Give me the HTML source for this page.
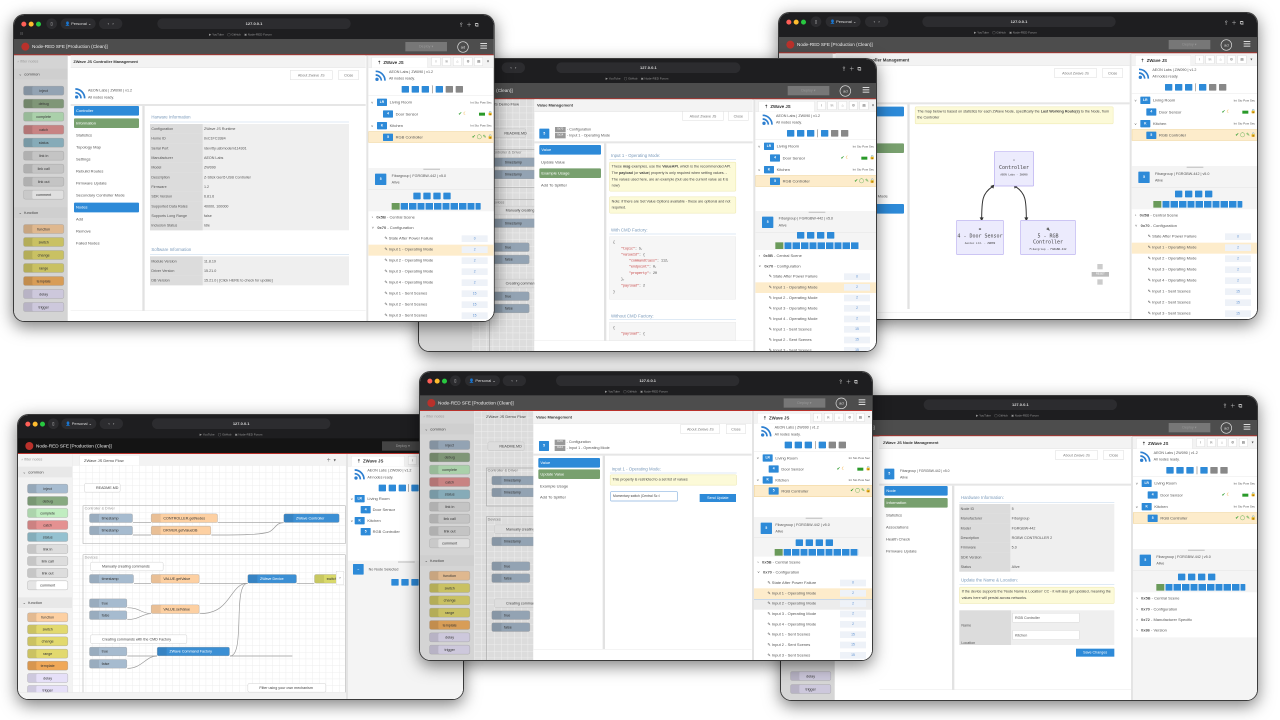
<!DOCTYPE html>
<html><head><meta charset="utf-8">
<style>
body{margin:0;width:1280px;height:720px;background:#fff;position:relative;overflow:hidden;font-family:"Liberation Sans",sans-serif}
.win{position:absolute;transform-origin:0 0;transform:scale(.33333);border-radius:34px;overflow:hidden;background:#fff;box-shadow:0 14px 50px rgba(0,0,0,.5);border:3px solid #3a3a3a;box-sizing:border-box}
.a{position:absolute}
.t{position:absolute;font-size:12px;color:#555;white-space:nowrap}
.s{font-size:11px}
.chr{left:0;top:0;right:0;height:72px;background:#1e1e20}
.dot{position:absolute;width:15px;height:15px;border-radius:50%;top:20px}
.pill{position:absolute;background:#2c2c2f;border-radius:16px;height:32px;top:10px;color:#ddd;font-size:12px;line-height:32px;text-align:center}
.bm{position:absolute;top:54px;font-size:9px;color:#999;white-space:nowrap}
.hdr{position:absolute;left:0;right:0;top:72px;height:46px;background:#141414;border-bottom:3px solid #b9312b}
.logo{position:absolute;left:22px;top:11px;width:24px;height:24px;border-radius:50%;background:#b9312b}
.htt{position:absolute;left:54px;top:14px;color:#eee;font-size:14px;white-space:nowrap}
.dep{position:absolute;top:9px;width:125px;height:28px;background:#555;color:#999;font-size:11px;line-height:28px;text-align:center}
.av{position:absolute;top:7px;width:30px;height:30px;border:2px solid #ddd;border-radius:50%;color:#ddd;font-size:12px;text-align:center;line-height:30px}
.hb{position:absolute;top:12px;width:20px;height:3px;background:#ddd;box-shadow:0 7px 0 #ddd,0 14px 0 #ddd}
.pal{position:absolute;left:0;top:121px;width:160px;bottom:0;background:#f3f3f3;border-right:1px solid #ddd}
.nd{position:absolute;left:28px;width:122px;height:28px;border-radius:6px;border:1px solid #999;font-size:11px;text-align:center;line-height:28px;color:#333;box-sizing:border-box;box-shadow:inset 26px 0 0 rgba(0,0,0,.1)}
.ph{position:absolute;left:0;right:0;height:32px;background:#e8e8e8;font-size:12px;color:#444;line-height:32px;padding-left:14px}
.shade{position:absolute;background:rgba(173,173,173,.37)}
.sb{position:absolute;background:#fff;border-left:6px solid #e4e4e4;overflow:hidden}
.tab{position:absolute;left:10px;top:6px;width:168px;height:31px;background:#fff;border:1px solid #ddd;border-bottom:none;font-weight:bold;font-size:13px;line-height:30px;padding-left:16px;box-sizing:border-box;color:#333}
.ib{position:absolute;top:6px;width:26px;height:26px;border:1px solid #ccc;background:#fff;font-size:10px;text-align:center;line-height:26px;color:#666;box-sizing:border-box}
.b{position:absolute;background:#2d8ad8;border-radius:2px}
.g{position:absolute;background:#888;border-radius:2px}
.bd{position:absolute;background:#2d8ad8;color:#fff;font-size:10px;text-align:center;border-radius:2px;font-weight:bold;height:22px;line-height:22px}
.ok{color:#2a9a2a;font-size:13px}
.vb{position:absolute;right:30px;width:78px;height:20px;background:#eef2f8;color:#5a8fd0;font-size:10px;text-align:center;line-height:20px}
.th{position:absolute;left:0;right:0;top:0;height:37px;background:#f3f3f3;border-bottom:1px solid #ddd}
.btn{position:absolute;height:28px;border:1px solid #ccc;background:#fff;font-size:11px;color:#777;text-align:center;line-height:28px;box-sizing:border-box}
.mi{position:absolute;height:29px;font-size:12px;color:#444;line-height:29px;padding-left:6px;border-radius:3px;box-sizing:border-box;white-space:nowrap}
.mb{background:#2d8ad8;color:#fff}
.mg{background:#78a06e;color:#fff}
.sh{position:absolute;font-size:13px;color:#7a9abb;white-space:nowrap}
.ul{position:absolute;height:2px;background:#cfe0f0}
.tr td{height:29px;font-size:11px;color:#555;padding:0 4px;white-space:nowrap}
table{border-collapse:collapse}
.note{position:absolute;background:#fcfad8;border:1px solid #e2db8c;border-radius:3px;font-size:11px;color:#444;line-height:19px;padding:4px 6px;box-sizing:border-box}
.cv{position:absolute;background-color:#fff;background-image:linear-gradient(#eee 1px,transparent 1px),linear-gradient(90deg,#eee 1px,transparent 1px);background-size:20px 20px}
.fn{position:absolute;height:27px;border-radius:5px;border:1px solid #999;font-size:11px;line-height:27px;color:#333;box-sizing:border-box;padding-left:36px;white-space:nowrap;box-shadow:inset 28px 0 0 rgba(0,0,0,.08)}
.cm{position:absolute;height:27px;border-radius:5px;border:1px solid #bbb;background:#fff;font-size:11px;line-height:27px;color:#444;box-sizing:border-box;padding-left:34px;white-space:nowrap}
.grp{position:absolute;border:2px solid #bbb;border-radius:2px}
.code{position:absolute;background:#f6f6f6;border:1px solid #e4e4e4;font-family:"Liberation Mono",monospace;font-size:10px;color:#444;line-height:18.5px;padding:8px 10px;box-sizing:border-box;white-space:pre}
.k{color:#c03030}
.gn{position:absolute;background:#ecebfd;border:2px solid #b9aef0;border-radius:3px;text-align:center;font-family:"DejaVu Sans Mono",monospace;color:#444;box-sizing:border-box}
</style></head><body>

<!-- ================= W3 top-right ================= -->
<div class="win" style="left:778px;top:12px;width:1440px;height:924px;z-index:1">
 <div class="a chr"></div>
 <div class="dot" style="left:22px;background:#ff5f57"></div><div class="dot" style="left:44px;background:#febc2e"></div><div class="dot" style="left:66px;background:#28c840"></div>
 <div class="pill" style="left:95px;width:32px">▯</div><div class="pill" style="left:140px;width:105px">👤 Personal ⌄</div><div class="pill" style="left:258px;width:70px">‹ &nbsp; ›</div>
 <div class="pill" style="left:430px;width:580px;font-weight:bold">127.0.0.1</div>
 <div class="t" style="left:1335px;top:16px;color:#ccc;font-size:16px">⇪ &nbsp;＋ &nbsp;⧉</div>
 <div class="bm" style="left:585px">▶ YouTube &nbsp;&nbsp; ◯ GitHub &nbsp;&nbsp; ▣ Node-RED Forum</div>
 <div class="hdr" style="background:#4d4d4d"><div class="logo"></div><div class="htt">Node-RED SFE [Production (Clean)]</div><div class="dep" style="right:140px;background:#777">Deploy ▾</div><div class="av" style="right:75px">ad</div><div class="hb" style="right:20px"></div></div>
 <div class="pal" style="background:#d6d6d6"></div>
 <div class="a" style="left:170px;top:121px;width:885px;bottom:0;background:#fff">
  <div class="th"></div><div class="t" style="left:11px;top:12px;font-weight:bold;color:#333;font-size:13px">ZWave JS Controller Management</div>
  <div class="btn" style="left:656px;top:45px;width:127px">About Zwave JS</div><div class="btn" style="left:800px;top:45px;width:62px">Close</div>
  <div class="a" style="left:0;right:0;top:147px;height:6px;background:#e6e6e6"></div>
  <div class="mi mb" style="left:10px;top:160px;width:195px"></div>
  <div class="mi mg" style="left:10px;top:270px;width:195px"></div>
  <div class="mi mb" style="left:10px;top:452px;width:195px"></div>
  <div class="t" style="left:10px;top:422px">Secondary Controller Mode</div>
  <div class="a" style="left:215px;top:153px;width:7px;bottom:30px;background:#e2e2e2"></div>
  <div class="note" style="left:238px;top:160px;width:595px;height:52px">The map below is based on statistics for each ZWave Node, specifically the <b>Last Working Route(s)</b> to the Node, from the Controller</div>
  <svg class="a" style="left:360px;top:390px" width="300" height="130"><path d="M110 10 C80 30,78 50,78 110" stroke="#333" stroke-width="3" fill="none"/><path d="M180 10 C210 30,212 50,212 110" stroke="#333" stroke-width="3" fill="none"/><path d="M104 8l12-4-3 12z" fill="#333"/><path d="M186 8l-12-4 3 12z" fill="#333"/><path d="M72 102l6 12 6-12z" fill="#333"/><path d="M206 102l6 12 6-12z" fill="#333"/></svg>
  <div class="gn" style="left:475px;top:294px;width:120px;height:105px"><div style="margin-top:18px;font-size:11px">⌔</div><div style="font-size:15px;margin-top:6px">Controller</div><div style="font-size:8px;margin-top:8px">AEON Labs - ZW090</div></div>
  <div class="gn" style="left:362px;top:500px;width:142px;height:105px"><div style="margin-top:18px;font-size:11px">▬</div><div style="font-size:15px;margin-top:6px">4 - Door Sensor</div><div style="font-size:8px;margin-top:8px">Aeotec Ltd. - ZW089</div></div>
  <div class="gn" style="left:554px;top:500px;width:166px;height:105px"><div style="margin-top:18px;font-size:11px">🔌</div><div style="font-size:15px;margin-top:6px">5 - RGB Controller</div><div style="font-size:8px;margin-top:8px">Fibargroup - FGRGBW-442</div></div>
  <div class="a" style="left:785px;top:632px;width:16px;height:16px;background:#ccc"></div><div class="a" style="left:768px;top:656px;width:52px;height:14px;background:#bbb;color:#fff;font-size:8px;text-align:center">RESET</div><div class="a" style="left:785px;top:678px;width:16px;height:16px;background:#ccc"></div>
  <div class="a" style="left:0;right:0;bottom:20px;height:1px;background:#ddd"></div>
 </div>
 <div class="sb" style="left:1052px;top:121px;width:388px;bottom:0">
  <div class="a" style="left:0;right:0;top:0;height:36px;background:#f3f3f3;border-bottom:1px solid #ddd"></div>
  <div class="tab">⇡&nbsp; ZWave JS</div>
  <div class="ib" style="left:190px">i</div><div class="ib" style="left:222px">⎘</div><div class="ib" style="left:254px">⌂</div><div class="ib" style="left:286px">⚙</div><div class="ib" style="left:318px">▤</div><div class="t" style="left:356px;top:10px">▾</div>
  <svg class="a" style="left:20px;top:44px" width="34" height="34"><circle cx="6" cy="28" r="5" fill="#2d7fd0"/><path d="M2 15a17 17 0 0 1 17 17" stroke="#2d7fd0" stroke-width="5" fill="none"/><path d="M2 4a28 28 0 0 1 28 28" stroke="#2d7fd0" stroke-width="5" fill="none"/></svg>
  <div class="t s" style="left:62px;top:44px">AEON Labs | ZW090 | v1.2</div><div class="t s" style="left:62px;top:64px">All nodes ready.</div>
  <div class="b" style="left:100px;top:92px;width:22px;height:20px"></div><div class="b" style="left:130px;top:92px;width:22px;height:20px"></div><div class="b" style="left:160px;top:92px;width:22px;height:20px"></div><div class="g" style="left:191px;top:90px;width:2px;height:24px"></div><div class="b" style="left:202px;top:92px;width:22px;height:20px"></div><div class="g" style="left:232px;top:92px;width:22px;height:20px"></div><div class="g" style="left:262px;top:92px;width:22px;height:20px"></div>
  <div class="a" style="left:0;right:0;top:120px;height:1px;background:#ddd"></div>
  <div class="t" style="left:8px;top:135px">˅</div><div class="bd" style="left:26px;top:130px;width:30px">LR</div><div class="t" style="left:64px;top:134px">Living Room</div><div class="t" style="right:18px;top:136px;font-size:9px">Int Sto Pow Sec</div>
  <div class="bd" style="left:44px;top:165px;width:30px">4</div><div class="t" style="left:82px;top:169px">Door Sensor</div><div class="t ok" style="right:92px;top:167px">✔ <span style="color:#f0a020">☾</span></div><div class="a" style="right:38px;top:172px;width:18px;height:9px;background:#2a9a2a"></div><div class="t ok" style="right:14px;top:166px">🔒</div>
  <div class="t" style="left:8px;top:205px">˅</div><div class="bd" style="left:26px;top:200px;width:30px">K</div><div class="t" style="left:64px;top:204px">Kitchen</div><div class="t" style="right:18px;top:206px;font-size:9px">Int Sto Pow Sec</div>
  <div class="a" style="left:0;right:0;top:228px;height:34px;background:#fdeccb;border:2px solid #f2d9a6;box-sizing:border-box"></div>
  <div class="bd" style="left:44px;top:235px;width:30px">5</div><div class="t" style="left:82px;top:239px">RGB Controller</div><div class="t ok" style="right:14px;top:236px">✔ ◯ ✎ 🔒</div>
  <div class="a" style="left:0;right:0;top:338px;bottom:0;background:#f4f4f4"></div><div class="a" style="left:165px;top:340px;width:50px;height:4px;background:#ccc"></div>
  <div class="bd" style="left:20px;top:355px;width:34px;height:34px;line-height:34px">5</div><div class="t s" style="left:70px;top:356px">Fibargroup | FGRGBW-442 | v5.0</div><div class="t s" style="left:70px;top:376px">Alive</div>
  <div class="a" style="left:0;right:0;top:402px;height:1px;background:#ddd"></div>
  <div class="b" style="left:130px;top:412px;width:22px;height:20px"></div><div class="b" style="left:160px;top:412px;width:22px;height:20px"></div><div class="b" style="left:190px;top:412px;width:22px;height:20px"></div><div class="b" style="left:220px;top:412px;width:22px;height:20px"></div>
  <div class="a" style="left:65px;top:443px;width:24px;height:20px;background:#6a9a5a"></div><div class="b" style="left:92px;top:443px;width:240px;height:20px;background:repeating-linear-gradient(90deg,#2d8ad8 0 22px,#fff 22px 25px)"></div>
  <div class="a" style="left:0;right:0;top:468px;bottom:0;background:#fff"></div>
  <div class="t" style="left:10px;top:478px">›&nbsp;&nbsp; <b>0x5B</b> - Central Scene</div>
  <div class="t" style="left:10px;top:510px">˅&nbsp;&nbsp; <b>0x70</b> - Configuration</div>
  <div class="t" style="left:48px;top:542px">✎ State After Power Failure</div><div class="vb" style="top:540px">0</div>
  <div class="a" style="left:0;right:0;top:568px;height:33px;background:#fdeccb"></div><div class="t" style="left:48px;top:575px">✎ Input 1 - Operating Mode</div><div class="vb" style="top:573px">2</div>
  <div class="t" style="left:48px;top:608px">✎ Input 2 - Operating Mode</div><div class="vb" style="top:606px">2</div>
  <div class="t" style="left:48px;top:641px">✎ Input 3 - Operating Mode</div><div class="vb" style="top:639px">2</div>
  <div class="t" style="left:48px;top:674px">✎ Input 4 - Operating Mode</div><div class="vb" style="top:672px">2</div>
  <div class="t" style="left:48px;top:707px">✎ Input 1 - Sent Scenes</div><div class="vb" style="top:705px">15</div>
  <div class="t" style="left:48px;top:740px">✎ Input 2 - Sent Scenes</div><div class="vb" style="top:738px">15</div>
  <div class="t" style="left:48px;top:773px">✎ Input 3 - Sent Scenes</div><div class="vb" style="top:771px">15</div>
 </div>
</div>

<!-- ================= W2 top-middle ================= -->
<div class="win" style="left:418px;top:58px;width:1377px;height:882px;z-index:2">
 <div class="a chr"></div>
 <div class="dot" style="left:22px;background:#ff5f57"></div><div class="dot" style="left:44px;background:#febc2e"></div><div class="dot" style="left:66px;background:#28c840"></div>
 <div class="pill" style="left:248px;width:70px">‹ &nbsp; ›</div>
 <div class="pill" style="left:412px;width:552px;font-weight:bold">127.0.0.1</div>
 <div class="t" style="left:1268px;top:16px;color:#ccc;font-size:16px">⇪ &nbsp;＋ &nbsp;⧉</div>
 <div class="bm" style="left:560px">▶ YouTube &nbsp;&nbsp; ◯ GitHub &nbsp;&nbsp; ▣ Node-RED Forum</div>
 <div class="hdr" style="background:#4d4d4d"><div class="logo"></div><div class="htt">Node-RED SFE [Production (Clean)]</div><div class="dep" style="right:140px;background:#777">Deploy ▾</div><div class="av" style="right:75px">ad</div><div class="hb" style="right:20px"></div></div>
 <div class="pal" style="background:#d6d6d6"></div>
 <div class="cv" style="left:161px;top:121px;width:200px;bottom:0;background-color:#ddd">
  <div class="t" style="left:20px;top:8px;color:#444">ZWave JS Demo Flow</div>
  <div class="cm" style="left:60px;top:88px;width:100px;background:#ddd">README.MD</div>
  <div class="grp" style="left:50px;top:150px;width:300px;height:112px;border-color:#aaa"></div><div class="t s" style="left:56px;top:154px;color:#777">Controller &amp; Driver</div>
  <div class="fn" style="left:60px;top:175px;width:130px;background:#93a3b3">timestamp</div><div class="fn" style="left:60px;top:212px;width:130px;background:#93a3b3">timestamp</div>
  <div class="grp" style="left:50px;top:300px;width:300px;height:500px;border-color:#aaa"></div><div class="t s" style="left:56px;top:304px;color:#777">Devices</div>
  <div class="cm" style="left:64px;top:320px;width:220px;background:#ddd">Manually creating commands</div>
  <div class="fn" style="left:60px;top:358px;width:130px;background:#93a3b3">timestamp</div>
  <div class="fn" style="left:60px;top:430px;width:110px;background:#93a3b3">true</div><div class="fn" style="left:60px;top:467px;width:110px;background:#93a3b3">false</div>
  <div class="cm" style="left:64px;top:539px;width:260px;background:#ddd">Creating commands</div>
  <div class="fn" style="left:60px;top:577px;width:110px;background:#93a3b3">true</div><div class="fn" style="left:60px;top:614px;width:110px;background:#93a3b3">false</div>
 </div>
 <div class="a" style="left:346px;top:121px;width:655px;bottom:0;background:#fff">
  <div class="th"></div><div class="t" style="left:8px;top:11px;font-weight:bold;color:#333;font-size:12px">Value Management</div>
  <div class="btn" style="left:445px;top:36px;width:122px">About Zwave JS</div><div class="btn" style="left:582px;top:36px;width:60px">Close</div>
  <div class="bd" style="left:15px;top:88px;width:30px;height:30px;line-height:30px">5</div>
  <div class="a" style="left:62px;top:83px;width:32px;height:16px;background:#999;color:#fff;font-size:8px;text-align:center">0x70</div><div class="a" style="left:62px;top:101px;width:32px;height:16px;background:#999;color:#fff;font-size:8px;text-align:center">0x14</div>
  <div class="t s" style="left:98px;top:84px">- Configuration</div><div class="t s" style="left:98px;top:102px">- Input 1 - Operating Mode</div>
  <div class="a" style="left:0;right:0;top:126px;height:6px;background:#e6e6e6"></div>
  <div class="mi mb" style="left:15px;top:137px;width:185px">Value</div>
  <div class="t" style="left:20px;top:182px">Update Value</div>
  <div class="mi mg" style="left:15px;top:207px;width:185px">Example Usage</div>
  <div class="t" style="left:20px;top:250px">Add To Splitter</div>
  <div class="a" style="left:209px;top:132px;width:7px;bottom:30px;background:#e2e2e2"></div>
  <div class="sh" style="left:230px;top:161px">Input 1 - Operating Mode:</div><div class="ul" style="left:225px;top:179px;width:380px"></div>
  <div class="note" style="left:225px;top:188px;width:380px;height:88px">These <b>msg</b> examples, use the <b>ValueAPI</b>, which is the recommended API. The <b>payload</b> (or <b>value</b>) property is only required when setting values. - The values used here, are an example (but use the current value as it is now)</div>
  <div class="note" style="left:225px;top:292px;width:380px;height:50px">Note: if there are Set Value Options available - these are optional and not required.</div>
  <div class="sh" style="left:230px;top:385px">With CMD Factory:</div><div class="ul" style="left:225px;top:403px;width:380px"></div>
  <div class="code" style="left:225px;top:412px;width:380px;height:188px">{
    <span class="k">"topic"</span>: 5,
    <span class="k">"valueId"</span>: {
        <span class="k">"commandClass"</span>: 112,
        <span class="k">"endpoint"</span>: 0,
        <span class="k">"property"</span>: 20
    },
    <span class="k">"payload"</span>: 2
}</div>
  <div class="sh" style="left:230px;top:642px">Without CMD Factory:</div><div class="ul" style="left:225px;top:660px;width:380px"></div>
  <div class="code" style="left:225px;top:668px;width:380px;height:100px">{
    <span class="k">"payload"</span>: {</div>
  <div class="a" style="left:0;right:0;bottom:0;height:30px;background:#fff;border-top:1px solid #ddd"></div>
 </div>
 <div class="sb" style="left:1003px;top:121px;width:374px;bottom:0">
  <div class="a" style="left:0;right:0;top:0;height:36px;background:#f3f3f3;border-bottom:1px solid #ddd"></div>
  <div class="tab">⇡&nbsp; ZWave JS</div>
  <div class="ib" style="left:185px">i</div><div class="ib" style="left:217px">⎘</div><div class="ib" style="left:249px">⌂</div><div class="ib" style="left:281px">⚙</div><div class="ib" style="left:313px">▤</div><div class="t" style="left:350px;top:10px">▾</div>
  <svg class="a" style="left:20px;top:44px" width="34" height="34"><circle cx="6" cy="28" r="5" fill="#2d7fd0"/><path d="M2 15a17 17 0 0 1 17 17" stroke="#2d7fd0" stroke-width="5" fill="none"/><path d="M2 4a28 28 0 0 1 28 28" stroke="#2d7fd0" stroke-width="5" fill="none"/></svg>
  <div class="t s" style="left:62px;top:44px">AEON Labs | ZW090 | v1.2</div><div class="t s" style="left:62px;top:64px">All nodes ready.</div>
  <div class="b" style="left:95px;top:92px;width:22px;height:20px"></div><div class="b" style="left:125px;top:92px;width:22px;height:20px"></div><div class="b" style="left:155px;top:92px;width:22px;height:20px"></div><div class="g" style="left:186px;top:90px;width:2px;height:24px"></div><div class="b" style="left:197px;top:92px;width:22px;height:20px"></div><div class="g" style="left:227px;top:92px;width:22px;height:20px"></div><div class="g" style="left:257px;top:92px;width:22px;height:20px"></div>
  <div class="a" style="left:0;right:0;top:120px;height:1px;background:#ddd"></div>
  <div class="t" style="left:8px;top:135px">˅</div><div class="bd" style="left:26px;top:130px;width:30px">LR</div><div class="t" style="left:64px;top:134px">Living Room</div><div class="t" style="right:18px;top:136px;font-size:9px">Int Sto Pow Sec</div>
  <div class="bd" style="left:44px;top:165px;width:30px">4</div><div class="t" style="left:82px;top:169px">Door Sensor</div><div class="t ok" style="right:92px;top:167px">✔ <span style="color:#f0a020">☾</span></div><div class="a" style="right:38px;top:172px;width:18px;height:9px;background:#2a9a2a"></div><div class="t ok" style="right:14px;top:166px">🔒</div>
  <div class="t" style="left:8px;top:205px">˅</div><div class="bd" style="left:26px;top:200px;width:30px">K</div><div class="t" style="left:64px;top:204px">Kitchen</div><div class="t" style="right:18px;top:206px;font-size:9px">Int Sto Pow Sec</div>
  <div class="a" style="left:0;right:0;top:228px;height:34px;background:#fdeccb;border:2px solid #f2d9a6;box-sizing:border-box"></div>
  <div class="bd" style="left:44px;top:235px;width:30px">5</div><div class="t" style="left:82px;top:239px">RGB Controller</div><div class="t ok" style="right:14px;top:236px">✔ ◯ ✎ 🔒</div>
  <div class="a" style="left:0;right:0;top:335px;bottom:0;background:#f4f4f4"></div><div class="a" style="left:160px;top:337px;width:50px;height:4px;background:#ccc"></div>
  <div class="bd" style="left:20px;top:352px;width:34px;height:34px;line-height:34px">5</div><div class="t s" style="left:70px;top:352px">Fibargroup | FGRGBW-442 | v5.0</div><div class="t s" style="left:70px;top:372px">Alive</div>
  <div class="a" style="left:0;right:0;top:398px;height:1px;background:#ddd"></div>
  <div class="b" style="left:125px;top:398px;width:22px;height:20px"></div><div class="b" style="left:155px;top:398px;width:22px;height:20px"></div><div class="b" style="left:185px;top:398px;width:22px;height:20px"></div><div class="b" style="left:215px;top:398px;width:22px;height:20px"></div>
  <div class="a" style="left:60px;top:429px;width:24px;height:20px;background:#6a9a5a"></div><div class="b" style="left:87px;top:429px;width:225px;height:20px;background:repeating-linear-gradient(90deg,#2d8ad8 0 22px,#fff 22px 25px)"></div>
  <div class="a" style="left:0;right:0;top:452px;bottom:0;background:#fff"></div>
  <div class="t" style="left:10px;top:462px">›&nbsp;&nbsp; <b>0x5B</b> - Central Scene</div>
  <div class="t" style="left:10px;top:493px">˅&nbsp;&nbsp; <b>0x70</b> - Configuration</div>
  <div class="t" style="left:40px;top:524px">✎ State After Power Failure</div><div class="vb" style="top:522px">0</div>
  <div class="a" style="left:0;right:0;top:549px;height:32px;background:#fdeccb"></div><div class="t" style="left:40px;top:556px">✎ Input 1 - Operating Mode</div><div class="vb" style="top:554px">2</div>
  <div class="t" style="left:40px;top:588px">✎ Input 2 - Operating Mode</div><div class="vb" style="top:586px">2</div>
  <div class="t" style="left:40px;top:619px">✎ Input 3 - Operating Mode</div><div class="vb" style="top:617px">2</div>
  <div class="t" style="left:40px;top:651px">✎ Input 4 - Operating Mode</div><div class="vb" style="top:649px">2</div>
  <div class="t" style="left:40px;top:682px">✎ Input 1 - Sent Scenes</div><div class="vb" style="top:680px">15</div>
  <div class="t" style="left:40px;top:714px">✎ Input 2 - Sent Scenes</div><div class="vb" style="top:712px">15</div>
  <div class="t" style="left:40px;top:745px">✎ Input 3 - Sent Scenes</div><div class="vb" style="top:743px">15</div>
 </div>
</div>

<!-- ================= W1 top-left ================= -->
<div class="win" style="left:13px;top:14px;width:1445px;height:924px;z-index:3">
 <div class="a chr"></div>
 <div class="dot" style="left:22px;background:#ff5f57"></div><div class="dot" style="left:44px;background:#febc2e"></div><div class="dot" style="left:66px;background:#28c840"></div>
 <div class="pill" style="left:97px;width:32px">▯</div><div class="pill" style="left:140px;width:105px">👤 Personal ⌄</div><div class="pill" style="left:255px;width:70px">‹ &nbsp; ›</div>
 <div class="pill" style="left:430px;width:580px;font-weight:bold">127.0.0.1</div>
 <div class="t" style="left:1335px;top:16px;color:#ccc;font-size:16px">⇪ &nbsp;＋ &nbsp;⧉</div>
 <div class="t" style="left:18px;top:52px;color:#888;font-size:10px">☷</div>
 <div class="bm" style="left:585px">▶ YouTube &nbsp;&nbsp; ◯ GitHub &nbsp;&nbsp; ▣ Node-RED Forum</div>
 <div class="hdr" style="background:#4d4d4d"><div class="logo"></div><div class="htt">Node-RED SFE [Production (Clean)]</div><div class="dep" style="right:140px;background:#777">Deploy ▾</div><div class="av" style="right:75px">ad</div><div class="hb" style="right:20px"></div></div>
 <div class="pal" style="background:#d4d4d4">
  <div class="t s" style="left:10px;top:12px;color:#999">⌕ filter nodes</div>
  <div class="ph" style="top:40px;background:#cfcfcf">⌄ &nbsp;common</div>
  <div class="nd" style="top:92px;background:#93a3b3">inject</div><div class="nd" style="top:131px;background:#7f9677">debug</div><div class="nd" style="top:170px;background:#aad0aa">complete</div><div class="nd" style="top:209px;background:#c88383">catch</div><div class="nd" style="top:248px;background:#86abb8">status</div><div class="nd" style="top:287px;background:#c4c4c4">link in</div><div class="nd" style="top:326px;background:#c4c4c4">link call</div><div class="nd" style="top:365px;background:#c4c4c4">link out</div><div class="nd" style="top:404px;background:#e0e0e0">comment</div>
  <div class="ph" style="top:456px;background:#cfcfcf">⌄ &nbsp;function</div>
  <div class="nd" style="top:507px;background:#dfb88f">function</div><div class="nd" style="top:546px;background:#c9c163">switch</div><div class="nd" style="top:585px;background:#c9c163">change</div><div class="nd" style="top:624px;background:#c9c163">range</div><div class="nd" style="top:663px;background:#d89d57">template</div><div class="nd" style="top:702px;background:#cdc8dc">delay</div><div class="nd" style="top:741px;background:#cdc8dc">trigger</div>
 </div>
 <div class="a" style="left:170px;top:121px;width:885px;bottom:0;background:#fff">
  <div class="th"></div><div class="t" style="left:8px;top:12px;font-weight:bold;color:#333;font-size:12px">ZWave JS Controller Management</div>
  <div class="btn" style="left:658px;top:45px;width:127px">About Zwave JS</div><div class="btn" style="left:803px;top:45px;width:62px">Close</div>
  <svg class="a" style="left:12px;top:97px" width="34" height="34"><circle cx="6" cy="28" r="5" fill="#2d7fd0"/><path d="M2 15a17 17 0 0 1 17 17" stroke="#2d7fd0" stroke-width="5" fill="none"/><path d="M2 4a28 28 0 0 1 28 28" stroke="#2d7fd0" stroke-width="5" fill="none"/></svg>
  <div class="t s" style="left:52px;top:100px">AEON Labs | ZW090 | v1.2</div><div class="t s" style="left:52px;top:120px">All nodes ready.</div>
  <div class="a" style="left:0;right:0;top:146px;height:6px;background:#e6e6e6"></div>
  <div class="mi mb" style="left:10px;top:152px;width:195px">Controller</div>
  <div class="mi mg" style="left:10px;top:189px;width:195px">Information</div>
  <div class="t" style="left:16px;top:232px">Statistics</div><div class="t" style="left:16px;top:268px">Topology Map</div><div class="t" style="left:16px;top:304px">Settings</div><div class="t" style="left:16px;top:340px">Rebuild Routes</div><div class="t" style="left:16px;top:377px">Firmware Update</div><div class="t" style="left:16px;top:413px">Secondary Controller Mode</div>
  <div class="mi mb" style="left:10px;top:442px;width:195px">Nodes</div>
  <div class="t" style="left:16px;top:485px">Add</div><div class="t" style="left:16px;top:521px">Remove</div><div class="t" style="left:16px;top:557px">Failed Nodes</div>
  <div class="a" style="left:215px;top:152px;width:7px;bottom:30px;background:#e2e2e2"></div>
  <div class="sh" style="left:242px;top:178px">Harware Information</div><div class="ul" style="left:238px;top:199px;width:597px"></div>
  <table class="a" style="left:238px;top:206px;width:597px;background:#efefef">
   <tr class="tr"><td style="width:150px;background:#dcdcdc">Configuration</td><td>ZWave JS Runtime</td></tr>
   <tr class="tr"><td style="background:#dcdcdc">Home ID</td><td>0xC1FC3384</td></tr>
   <tr class="tr"><td style="background:#dcdcdc">Serial Port</td><td>/dev/tty.usbmodem114301</td></tr>
   <tr class="tr"><td style="background:#dcdcdc">Manufacturer</td><td>AEON Labs</td></tr>
   <tr class="tr"><td style="background:#dcdcdc">Model</td><td>ZW090</td></tr>
   <tr class="tr"><td style="background:#dcdcdc">Description</td><td>Z-Stick Gen5 USB Controller</td></tr>
   <tr class="tr"><td style="background:#dcdcdc">Firmware</td><td>1.2</td></tr>
   <tr class="tr"><td style="background:#dcdcdc">SDK Version</td><td>6.81.6</td></tr>
   <tr class="tr"><td style="background:#dcdcdc">Supported Data Rates</td><td>40000, 100000</td></tr>
   <tr class="tr"><td style="background:#dcdcdc">Supports Long Range</td><td>false</td></tr>
   <tr class="tr"><td style="background:#dcdcdc">Inclusion Status</td><td>Idle</td></tr>
  </table>
  <div class="sh" style="left:242px;top:575px">Software Information</div><div class="ul" style="left:238px;top:596px;width:597px"></div>
  <table class="a" style="left:238px;top:603px;width:597px;background:#efefef">
   <tr class="tr"><td style="width:150px;background:#dcdcdc">Module Version</td><td>11.8.19</td></tr>
   <tr class="tr"><td style="background:#dcdcdc">Driver Version</td><td>15.21.0</td></tr>
   <tr class="tr"><td style="background:#dcdcdc">DB Version</td><td>15.21.0 | [Click HERE to check for update]</td></tr>
  </table>
  <div class="a" style="left:0;right:0;bottom:0;height:30px;background:#fff;border-top:1px solid #ddd"></div>
 </div>
 <div class="sb" style="left:1057px;top:121px;width:388px;bottom:0">
  <div class="a" style="left:0;right:0;top:0;height:36px;background:#f3f3f3;border-bottom:1px solid #ddd"></div>
  <div class="tab">⇡&nbsp; ZWave JS</div>
  <div class="ib" style="left:190px">i</div><div class="ib" style="left:222px">⎘</div><div class="ib" style="left:254px">⌂</div><div class="ib" style="left:286px">⚙</div><div class="ib" style="left:318px">▤</div><div class="t" style="left:356px;top:10px">▾</div>
  <svg class="a" style="left:20px;top:44px" width="34" height="34"><circle cx="6" cy="28" r="5" fill="#2d7fd0"/><path d="M2 15a17 17 0 0 1 17 17" stroke="#2d7fd0" stroke-width="5" fill="none"/><path d="M2 4a28 28 0 0 1 28 28" stroke="#2d7fd0" stroke-width="5" fill="none"/></svg>
  <div class="t s" style="left:62px;top:44px">AEON Labs | ZW090 | v1.2</div><div class="t s" style="left:62px;top:64px">All nodes ready.</div>
  <div class="b" style="left:100px;top:92px;width:22px;height:20px"></div><div class="b" style="left:130px;top:92px;width:22px;height:20px"></div><div class="b" style="left:160px;top:92px;width:22px;height:20px"></div><div class="g" style="left:191px;top:90px;width:2px;height:24px"></div><div class="b" style="left:202px;top:92px;width:22px;height:20px"></div><div class="g" style="left:232px;top:92px;width:22px;height:20px"></div><div class="g" style="left:262px;top:92px;width:22px;height:20px"></div>
  <div class="a" style="left:0;right:0;top:120px;height:1px;background:#ddd"></div>
  <div class="t" style="left:8px;top:135px">˅</div><div class="bd" style="left:26px;top:130px;width:30px">LR</div><div class="t" style="left:64px;top:134px">Living Room</div><div class="t" style="right:18px;top:136px;font-size:9px">Int Sto Pow Sec</div>
  <div class="bd" style="left:44px;top:165px;width:30px">4</div><div class="t" style="left:82px;top:169px">Door Sensor</div><div class="t ok" style="right:92px;top:167px">✔ <span style="color:#f0a020">☾</span></div><div class="a" style="right:38px;top:172px;width:18px;height:9px;background:#2a9a2a"></div><div class="t ok" style="right:14px;top:166px">🔒</div>
  <div class="t" style="left:8px;top:205px">˅</div><div class="bd" style="left:26px;top:200px;width:30px">K</div><div class="t" style="left:64px;top:204px">Kitchen</div><div class="t" style="right:18px;top:206px;font-size:9px">Int Sto Pow Sec</div>
  <div class="a" style="left:0;right:0;top:228px;height:34px;background:#fdeccb;border:2px solid #f2d9a6;box-sizing:border-box"></div>
  <div class="bd" style="left:44px;top:235px;width:30px">5</div><div class="t" style="left:82px;top:239px">RGB Controller</div><div class="t ok" style="right:14px;top:236px">✔ ◯ ✎ 🔒</div>
  <div class="a" style="left:0;right:0;top:338px;bottom:0;background:#f4f4f4"></div><div class="a" style="left:165px;top:340px;width:50px;height:4px;background:#ccc"></div>
  <div class="bd" style="left:20px;top:355px;width:34px;height:34px;line-height:34px">5</div><div class="t s" style="left:70px;top:356px">Fibargroup | FGRGBW-442 | v5.0</div><div class="t s" style="left:70px;top:376px">Alive</div>
  <div class="a" style="left:0;right:0;top:402px;height:1px;background:#ddd"></div>
  <div class="b" style="left:135px;top:412px;width:22px;height:20px"></div><div class="b" style="left:165px;top:412px;width:22px;height:20px"></div><div class="b" style="left:195px;top:412px;width:22px;height:20px"></div><div class="b" style="left:225px;top:412px;width:22px;height:20px"></div>
  <div class="a" style="left:70px;top:443px;width:24px;height:20px;background:#6a9a5a"></div><div class="b" style="left:97px;top:443px;width:240px;height:20px;background:repeating-linear-gradient(90deg,#2d8ad8 0 22px,#fff 22px 25px)"></div>
  <div class="a" style="left:0;right:0;top:468px;bottom:0;background:#fff"></div>
  <div class="t" style="left:10px;top:478px">›&nbsp;&nbsp; <b>0x5B</b> - Central Scene</div>
  <div class="t" style="left:10px;top:510px">˅&nbsp;&nbsp; <b>0x70</b> - Configuration</div>
  <div class="t" style="left:48px;top:542px">✎ State After Power Failure</div><div class="vb" style="top:540px">0</div>
  <div class="a" style="left:0;right:0;top:568px;height:33px;background:#fdeccb"></div><div class="t" style="left:48px;top:575px">✎ Input 1 - Operating Mode</div><div class="vb" style="top:573px">2</div>
  <div class="t" style="left:48px;top:608px">✎ Input 2 - Operating Mode</div><div class="vb" style="top:606px">2</div>
  <div class="t" style="left:48px;top:641px">✎ Input 3 - Operating Mode</div><div class="vb" style="top:639px">2</div>
  <div class="t" style="left:48px;top:674px">✎ Input 4 - Operating Mode</div><div class="vb" style="top:672px">2</div>
  <div class="t" style="left:48px;top:707px">✎ Input 1 - Sent Scenes</div><div class="vb" style="top:705px">15</div>
  <div class="t" style="left:48px;top:740px">✎ Input 2 - Sent Scenes</div><div class="vb" style="top:738px">15</div>
  <div class="t" style="left:48px;top:773px">✎ Input 3 - Sent Scenes</div><div class="vb" style="top:771px">15</div>
 </div>
</div>

<!-- ================= W4 bottom-left ================= -->
<div class="win" style="left:17px;top:414px;width:1341px;height:858px;z-index:1">
 <div class="a chr"></div>
 <div class="dot" style="left:22px;background:#ff5f57"></div><div class="dot" style="left:44px;background:#febc2e"></div><div class="dot" style="left:66px;background:#28c840"></div>
 <div class="pill" style="left:90px;width:32px">▯</div><div class="pill" style="left:130px;width:105px">👤 Personal ⌄</div><div class="pill" style="left:245px;width:70px">‹ &nbsp; ›</div>
 <div class="pill" style="left:402px;width:535px;font-weight:bold">127.0.0.1</div>
 <div class="bm" style="left:545px">▶ YouTube &nbsp;&nbsp; ◯ GitHub &nbsp;&nbsp; ▣ Node-RED Forum</div>
 <div class="hdr" style="top:70px;height:44px"><div class="logo"></div><div class="htt">Node-RED SFE [Production (Clean)]</div><div class="dep" style="left:1092px;background:#444">Deploy ▾</div></div>
 <div class="pal" style="top:117px;width:162px">
  <div class="t s" style="left:10px;top:10px;color:#999">⌕ filter nodes</div>
  <div class="ph" style="top:38px">⌄ &nbsp;common</div>
  <div class="nd" style="top:90px;background:#a6bbcf">inject</div><div class="nd" style="top:127px;background:#87a980">debug</div><div class="nd" style="top:163px;background:#c0edc0">complete</div><div class="nd" style="top:199px;background:#e49191">catch</div><div class="nd" style="top:235px;background:#94c1d0">status</div><div class="nd" style="top:271px;background:#ddd">link in</div><div class="nd" style="top:307px;background:#ddd">link call</div><div class="nd" style="top:343px;background:#ddd">link out</div><div class="nd" style="top:380px;background:#fff">comment</div>
  <div class="ph" style="top:430px">⌄ &nbsp;function</div>
  <div class="nd" style="top:476px;background:#fdd0a2">function</div><div class="nd" style="top:512px;background:#e2d96e">switch</div><div class="nd" style="top:548px;background:#e2d96e">change</div><div class="nd" style="top:585px;background:#e2d96e">range</div><div class="nd" style="top:621px;background:#f0a858">template</div><div class="nd" style="top:658px;background:#e6e0f8">delay</div><div class="nd" style="top:694px;background:#e6e0f8">trigger</div>
 </div>
 <div class="a" style="left:163px;top:117px;width:822px;height:34px;background:#f3f3f3;border-bottom:1px solid #ddd"></div>
 <div class="a" style="left:185px;top:121px;width:180px;height:30px;background:#fff;border:1px solid #ddd;border-bottom:none;font-size:12px;color:#444;line-height:30px;padding-left:12px;box-sizing:border-box">ZWave JS Demo Flow</div>
 <div class="t" style="left:925px;top:124px;font-size:14px">＋ &nbsp;▾</div>
 <div class="cv" style="left:163px;top:151px;width:820px;height:680px"></div>
 <svg class="a" style="left:163px;top:151px" width="820" height="680"><g stroke="#999" stroke-width="2" fill="none">
  <path d="M182 172 H236"/><path d="M182 209 H236"/><path d="M436 172 H634"/><path d="M417 209 C500 209,560 209,590 200 C610 190,610 172,634 172"/>
  <path d="M185 354 H236"/><path d="M382 354 H526"/><path d="M673 354 H726"/><path d="M165 427 C200 427,210 445,236 445"/><path d="M165 463 C200 463,210 445,236 445"/><path d="M382 445 C480 445,470 354,526 354"/><path d="M165 572 C200 572,210 572,254 572"/><path d="M165 609 C210 609,220 572,254 572"/><path d="M473 572 C520 572,480 354,526 354"/><path d="M473 572 H660"/>
 </g></svg>
 <div class="cm" style="left:199px;top:205px;width:108px">README.MD</div>
 <div class="grp" style="left:194px;top:271px;width:785px;height:112px"></div><div class="t s" style="left:200px;top:274px;color:#999">Controller &amp; Driver</div>
 <div class="fn" style="left:214px;top:296px;width:130px;background:#a6bbcf">timestamp</div><div class="fn" style="left:214px;top:333px;width:130px;background:#a6bbcf">timestamp</div>
 <div class="fn" style="left:399px;top:296px;width:200px;background:#fdd0a2">CONTROLLER.getNodes</div><div class="fn" style="left:399px;top:333px;width:180px;background:#fdd0a2">DRIVER.getValueDB</div>
 <div class="fn" style="left:797px;top:296px;width:167px;background:#3b8fd4;color:#fff">ZWave Controller</div>
 <div class="grp" style="left:194px;top:418px;width:785px;height:440px"></div><div class="t s" style="left:200px;top:421px;color:#999">Devices</div>
 <div class="cm" style="left:217px;top:441px;width:219px">Manually creating commands</div>
 <div class="fn" style="left:214px;top:478px;width:133px;background:#a6bbcf">timestamp</div><div class="fn" style="left:399px;top:478px;width:145px;background:#fdd0a2">VALUE.getValue</div>
 <div class="fn" style="left:689px;top:478px;width:147px;background:#3b8fd4;color:#fff">ZWave Device</div><div class="fn" style="left:889px;top:478px;width:75px;background:#d9d96a">switch</div>
 <div class="fn" style="left:214px;top:551px;width:113px;background:#a6bbcf">true</div><div class="fn" style="left:214px;top:587px;width:113px;background:#a6bbcf">false</div><div class="fn" style="left:399px;top:569px;width:145px;background:#fdd0a2">VALUE.setValue</div>
 <div class="cm" style="left:217px;top:659px;width:290px">Creating commands with the CMD Factory</div>
 <div class="fn" style="left:214px;top:696px;width:113px;background:#a6bbcf">true</div><div class="fn" style="left:214px;top:733px;width:113px;background:#a6bbcf">false</div>
 <div class="fn" style="left:417px;top:696px;width:218px;background:#3b8fd4;color:#fff">ZWave Command Factory</div>
 <div class="cm" style="left:689px;top:805px;width:235px">Filter using your own mechanism</div>
 <div class="a" style="left:954px;top:468px;width:22px;height:40px;background:#fff;border:1px solid #ccc;font-size:11px;text-align:center;line-height:40px">›</div>
 <div class="a" style="left:0;right:0;top:832px;bottom:0;background:#f3f3f3;border-top:1px solid #ddd"></div>
 <div class="sb" style="left:984px;top:117px;width:357px;bottom:0">
  <div class="a" style="left:0;right:0;top:0;height:36px;background:#f3f3f3;border-bottom:1px solid #ddd"></div>
  <div class="tab" style="width:160px">⇡&nbsp; ZWave JS</div>
  <div class="ib" style="left:180px">i</div><div class="ib" style="left:212px">⎘</div>
  <svg class="a" style="left:18px;top:44px" width="34" height="34"><circle cx="6" cy="28" r="5" fill="#2d7fd0"/><path d="M2 15a17 17 0 0 1 17 17" stroke="#2d7fd0" stroke-width="5" fill="none"/><path d="M2 4a28 28 0 0 1 28 28" stroke="#2d7fd0" stroke-width="5" fill="none"/></svg>
  <div class="t s" style="left:58px;top:44px">AEON Labs | ZW090 | v1.2</div><div class="t s" style="left:58px;top:64px">All nodes ready.</div>
  <div class="b" style="left:92px;top:92px;width:22px;height:20px"></div><div class="b" style="left:122px;top:92px;width:22px;height:20px"></div><div class="b" style="left:152px;top:92px;width:22px;height:20px"></div><div class="g" style="left:180px;top:90px;width:2px;height:24px"></div><div class="b" style="left:190px;top:92px;width:22px;height:20px"></div>
  <div class="t" style="left:8px;top:128px">˅</div><div class="bd" style="left:20px;top:123px;width:30px">LR</div><div class="t" style="left:58px;top:127px">Living Room</div>
  <div class="bd" style="left:38px;top:156px;width:30px">4</div><div class="t" style="left:74px;top:160px">Door Sensor</div>
  <div class="t" style="left:8px;top:194px">˅</div><div class="bd" style="left:20px;top:189px;width:30px">K</div><div class="t" style="left:58px;top:193px">Kitchen</div>
  <div class="bd" style="left:38px;top:222px;width:30px">5</div><div class="t" style="left:74px;top:226px">RGB Controller</div>
  <div class="a" style="left:0;right:0;top:320px;bottom:0;background:#f4f4f4"></div><div class="a" style="left:150px;top:322px;width:50px;height:4px;background:#ccc"></div>
  <div class="bd" style="left:15px;top:330px;width:32px;height:32px;line-height:32px">–</div><div class="t s" style="left:62px;top:340px">No Node Selected</div>
  <div class="b" style="left:130px;top:375px;width:22px;height:20px"></div><div class="b" style="left:160px;top:375px;width:22px;height:20px"></div><div class="b" style="left:190px;top:375px;width:22px;height:20px"></div>
 </div>
</div>

<!-- ================= W6 bottom-right ================= -->
<div class="win" style="left:780px;top:395px;width:1434px;height:918px;z-index:1">
 <div class="a chr"></div>
 <div class="dot" style="left:22px;background:#ff5f57"></div><div class="dot" style="left:44px;background:#febc2e"></div><div class="dot" style="left:66px;background:#28c840"></div>
 <div class="pill" style="left:428px;width:580px;font-weight:bold">127.0.0.1</div>
 <div class="t" style="left:1325px;top:16px;color:#ccc;font-size:16px">⇪ &nbsp;＋ &nbsp;⧉</div>
 <div class="bm" style="left:585px">▶ YouTube &nbsp;&nbsp; ◯ GitHub &nbsp;&nbsp; ▣ Node-RED Forum</div>
 <div class="hdr" style="background:#4d4d4d"><div class="logo"></div><div class="htt">Node-RED SFE [Production (Clean)]</div><div class="dep" style="right:140px;background:#777">Deploy ▾</div><div class="av" style="right:75px">ad</div><div class="hb" style="right:20px"></div></div>
 <div class="pal" style="background:#d6d6d6">
  <div class="nd" style="top:705px;background:#cdc8dc">delay</div><div class="nd" style="top:744px;background:#cdc8dc">trigger</div>
 </div>
 <div class="a" style="left:295px;top:121px;width:758px;bottom:0;background:#fff">
  <div class="th"></div><div class="t" style="left:11px;top:12px;font-weight:bold;color:#333;font-size:12px">ZWave JS Node Management</div>
  <div class="btn" style="left:528px;top:42px;width:127px">About Zwave JS</div><div class="btn" style="left:672px;top:42px;width:62px">Close</div>
  <div class="bd" style="left:15px;top:97px;width:30px;height:32px;line-height:32px">5</div>
  <div class="t s" style="left:62px;top:99px;font-size:10px">Fibargroup | FGRGBW-442 | v5.0</div><div class="t s" style="left:62px;top:118px">Alive</div>
  <div class="a" style="left:0;right:0;top:142px;height:6px;background:#e6e6e6"></div>
  <div class="mi mb" style="left:15px;top:149px;width:190px">Node</div>
  <div class="mi mg" style="left:15px;top:185px;width:190px">Information</div>
  <div class="t" style="left:20px;top:230px">Statistics</div><div class="t" style="left:20px;top:266px">Associations</div><div class="t" style="left:20px;top:302px">Health Check</div><div class="t" style="left:20px;top:338px">Firmware Update</div>
  <div class="a" style="left:218px;top:148px;width:7px;bottom:30px;background:#e2e2e2"></div>
  <div class="sh" style="left:245px;top:176px">Hardware Information:</div><div class="ul" style="left:240px;top:197px;width:465px"></div>
  <table class="a" style="left:240px;top:203px;width:465px;background:#efefef">
   <tr class="tr"><td style="width:145px;background:#dcdcdc">Node ID</td><td>5</td></tr>
   <tr class="tr"><td style="background:#dcdcdc">Manufacturer</td><td>Fibargroup</td></tr>
   <tr class="tr"><td style="background:#dcdcdc">Model</td><td>FGRGBW-442</td></tr>
   <tr class="tr"><td style="background:#dcdcdc">Description</td><td>RGBW CONTROLLER 2</td></tr>
   <tr class="tr"><td style="background:#dcdcdc">Firmware</td><td>5.0</td></tr>
   <tr class="tr"><td style="background:#dcdcdc">SDK Version</td><td></td></tr>
   <tr class="tr"><td style="background:#dcdcdc">Status</td><td>Alive</td></tr>
  </table>
  <div class="sh" style="left:245px;top:424px">Update the Name &amp; Location:</div><div class="ul" style="left:240px;top:443px;width:465px"></div>
  <div class="note" style="left:240px;top:452px;width:465px;height:50px">If the device supports the 'Node Name &amp; Location' CC - it will also get updated, meaning the values here will persist across networks.</div>
  <div class="a" style="left:240px;top:522px;width:465px;height:104px;background:#efefef"></div><div class="a" style="left:240px;top:522px;width:155px;height:104px;background:#dcdcdc"></div>
  <div class="t s" style="left:246px;top:562px">Name</div><div class="t s" style="left:246px;top:614px">Location</div>
  <div class="a" style="left:400px;top:530px;width:200px;height:28px;background:#fff;border:1px solid #ccc;font-size:11px;color:#555;line-height:28px;padding-left:6px;box-sizing:border-box">RGB Controller</div>
  <div class="a" style="left:400px;top:582px;width:200px;height:28px;background:#fff;border:1px solid #ccc;font-size:11px;color:#555;line-height:28px;padding-left:6px;box-sizing:border-box">Kitchen</div>
  <div class="a" style="left:590px;top:637px;width:115px;height:24px;background:#2d8ad8;color:#fff;font-size:11px;text-align:center;line-height:24px">Save Changes</div>
  <div class="a" style="left:0;right:0;bottom:0;height:30px;background:#fff;border-top:1px solid #ddd"></div>
 </div>
 <div class="sb" style="left:1050px;top:121px;width:384px;bottom:0">
  <div class="a" style="left:0;right:0;top:0;height:36px;background:#f3f3f3;border-bottom:1px solid #ddd"></div>
  <div class="tab">⇡&nbsp; ZWave JS</div>
  <div class="ib" style="left:190px">i</div><div class="ib" style="left:222px">⎘</div><div class="ib" style="left:254px">⌂</div><div class="ib" style="left:286px">⚙</div><div class="ib" style="left:318px">▤</div><div class="t" style="left:356px;top:10px">▾</div>
  <svg class="a" style="left:20px;top:44px" width="34" height="34"><circle cx="6" cy="28" r="5" fill="#2d7fd0"/><path d="M2 15a17 17 0 0 1 17 17" stroke="#2d7fd0" stroke-width="5" fill="none"/><path d="M2 4a28 28 0 0 1 28 28" stroke="#2d7fd0" stroke-width="5" fill="none"/></svg>
  <div class="t s" style="left:62px;top:44px">AEON Labs | ZW090 | v1.2</div><div class="t s" style="left:62px;top:64px">All nodes ready.</div>
  <div class="b" style="left:100px;top:92px;width:22px;height:20px"></div><div class="b" style="left:130px;top:92px;width:22px;height:20px"></div><div class="b" style="left:160px;top:92px;width:22px;height:20px"></div><div class="g" style="left:191px;top:90px;width:2px;height:24px"></div><div class="b" style="left:202px;top:92px;width:22px;height:20px"></div><div class="g" style="left:232px;top:92px;width:22px;height:20px"></div><div class="g" style="left:262px;top:92px;width:22px;height:20px"></div>
  <div class="a" style="left:0;right:0;top:120px;height:1px;background:#ddd"></div>
  <div class="t" style="left:8px;top:135px">˅</div><div class="bd" style="left:26px;top:130px;width:30px">LR</div><div class="t" style="left:64px;top:134px">Living Room</div><div class="t" style="right:18px;top:136px;font-size:9px">Int Sto Pow Sec</div>
  <div class="bd" style="left:44px;top:165px;width:30px">4</div><div class="t" style="left:82px;top:169px">Door Sensor</div><div class="t ok" style="right:92px;top:167px">✔ <span style="color:#f0a020">☾</span></div><div class="a" style="right:38px;top:172px;width:18px;height:9px;background:#2a9a2a"></div><div class="t ok" style="right:14px;top:166px">🔒</div>
  <div class="t" style="left:8px;top:205px">˅</div><div class="bd" style="left:26px;top:200px;width:30px">K</div><div class="t" style="left:64px;top:204px">Kitchen</div><div class="t" style="right:18px;top:206px;font-size:9px">Int Sto Pow Sec</div>
  <div class="a" style="left:0;right:0;top:228px;height:34px;background:#fdeccb;border:2px solid #f2d9a6;box-sizing:border-box"></div>
  <div class="bd" style="left:44px;top:235px;width:30px">5</div><div class="t" style="left:82px;top:239px">RGB Controller</div><div class="t ok" style="right:14px;top:236px">✔ ◯ ✎ 🔒</div>
  <div class="a" style="left:0;right:0;top:338px;bottom:0;background:#f4f4f4"></div><div class="a" style="left:165px;top:340px;width:50px;height:4px;background:#ccc"></div>
  <div class="bd" style="left:20px;top:355px;width:34px;height:34px;line-height:34px">5</div><div class="t s" style="left:70px;top:356px">Fibargroup | FGRGBW-442 | v5.0</div><div class="t s" style="left:70px;top:376px">Alive</div>
  <div class="a" style="left:0;right:0;top:402px;height:1px;background:#ddd"></div>
  <div class="b" style="left:135px;top:412px;width:22px;height:20px"></div><div class="b" style="left:165px;top:412px;width:22px;height:20px"></div><div class="b" style="left:195px;top:412px;width:22px;height:20px"></div><div class="b" style="left:225px;top:412px;width:22px;height:20px"></div>
  <div class="a" style="left:70px;top:443px;width:24px;height:20px;background:#6a9a5a"></div><div class="b" style="left:97px;top:443px;width:240px;height:20px;background:repeating-linear-gradient(90deg,#2d8ad8 0 22px,#fff 22px 25px)"></div>
  <div class="a" style="left:0;right:0;top:468px;height:135px;background:#fff"></div>
  <div class="t" style="left:10px;top:479px">›&nbsp;&nbsp; <b>0x5B</b> - Central Scene</div>
  <div class="t" style="left:10px;top:511px">›&nbsp;&nbsp; <b>0x70</b> - Configuration</div>
  <div class="t" style="left:10px;top:543px">›&nbsp;&nbsp; <b>0x72</b> - Manufacturer Specific</div>
  <div class="t" style="left:10px;top:575px">›&nbsp;&nbsp; <b>0x86</b> - Version</div>
 </div>
</div>

<!-- ================= W5 bottom-middle ================= -->
<div class="win" style="left:419px;top:371px;width:1362px;height:870px;z-index:2">
 <div class="a chr"></div>
 <div class="dot" style="left:22px;background:#ff5f57"></div><div class="dot" style="left:44px;background:#febc2e"></div><div class="dot" style="left:66px;background:#28c840"></div>
 <div class="pill" style="left:90px;width:32px">▯</div><div class="pill" style="left:135px;width:105px">👤 Personal ⌄</div><div class="pill" style="left:248px;width:70px">‹ &nbsp; ›</div>
 <div class="pill" style="left:408px;width:550px;font-weight:bold">127.0.0.1</div>
 <div class="t" style="left:1255px;top:16px;color:#ccc;font-size:16px">⇪ &nbsp;＋ &nbsp;⧉</div>
 <div class="bm" style="left:555px">▶ YouTube &nbsp;&nbsp; ◯ GitHub &nbsp;&nbsp; ▣ Node-RED Forum</div>
 <div class="hdr" style="background:#4d4d4d;top:70px;height:44px"><div class="logo"></div><div class="htt">Node-RED SFE [Production (Clean)]</div><div class="dep" style="right:140px;background:#777">Deploy ▾</div><div class="av" style="right:75px">ad</div><div class="hb" style="right:20px"></div></div>
 <div class="pal" style="top:117px;width:162px;background:#d4d4d4">
  <div class="t s" style="left:10px;top:10px;color:#999">⌕ filter nodes</div>
  <div class="ph" style="top:38px;background:#cfcfcf">⌄ &nbsp;common</div>
  <div class="nd" style="top:88px;background:#93a3b3">inject</div><div class="nd" style="top:125px;background:#7f9677">debug</div><div class="nd" style="top:162px;background:#aad0aa">complete</div><div class="nd" style="top:199px;background:#c88383">catch</div><div class="nd" style="top:236px;background:#86abb8">status</div><div class="nd" style="top:273px;background:#c4c4c4">link in</div><div class="nd" style="top:309px;background:#c4c4c4">link call</div><div class="nd" style="top:346px;background:#c4c4c4">link out</div><div class="nd" style="top:383px;background:#e0e0e0">comment</div>
  <div class="ph" style="top:433px;background:#cfcfcf">⌄ &nbsp;function</div>
  <div class="nd" style="top:480px;background:#dfb88f">function</div><div class="nd" style="top:517px;background:#c9c163">switch</div><div class="nd" style="top:554px;background:#c9c163">change</div><div class="nd" style="top:591px;background:#c9c163">range</div><div class="nd" style="top:628px;background:#d89d57">template</div><div class="nd" style="top:665px;background:#cdc8dc">delay</div><div class="nd" style="top:702px;background:#cdc8dc">trigger</div>
 </div>
 <div class="cv" style="left:163px;top:117px;width:180px;bottom:0;background-color:#dcdcdc">
  <div class="t" style="left:35px;top:10px;color:#444">ZWave JS Demo Flow</div>
  <div class="cm" style="left:40px;top:92px;width:110px;background:#ddd">README.MD</div>
  <div class="grp" style="left:35px;top:170px;width:300px;height:112px;border-color:#aaa"></div><div class="t s" style="left:40px;top:173px;color:#777">Controller &amp; Driver</div>
  <div class="fn" style="left:52px;top:195px;width:130px;background:#93a3b3">timestamp</div><div class="fn" style="left:52px;top:231px;width:130px;background:#93a3b3">timestamp</div>
  <div class="grp" style="left:35px;top:316px;width:300px;height:500px;border-color:#aaa"></div><div class="t s" style="left:40px;top:319px;color:#777">Devices</div>
  <div class="cm" style="left:60px;top:341px;width:220px;background:#ddd">Manually creating commands</div>
  <div class="fn" style="left:52px;top:378px;width:130px;background:#93a3b3">timestamp</div>
  <div class="fn" style="left:52px;top:452px;width:115px;background:#93a3b3">true</div><div class="fn" style="left:52px;top:488px;width:115px;background:#93a3b3">false</div>
  <div class="cm" style="left:60px;top:563px;width:260px;background:#ddd">Creating commands</div>
  <div class="fn" style="left:52px;top:599px;width:115px;background:#93a3b3">true</div><div class="fn" style="left:52px;top:635px;width:115px;background:#93a3b3">false</div>
 </div>
 <div class="a" style="left:340px;top:117px;width:655px;bottom:0;background:#fff">
  <div class="th"></div><div class="t" style="left:8px;top:11px;font-weight:bold;color:#333;font-size:12px">Value Management</div>
  <div class="btn" style="left:442px;top:40px;width:118px">About Zwave JS</div><div class="btn" style="left:578px;top:40px;width:60px">Close</div>
  <div class="bd" style="left:17px;top:90px;width:30px;height:30px;line-height:30px">5</div>
  <div class="a" style="left:64px;top:86px;width:32px;height:16px;background:#999;color:#fff;font-size:8px;text-align:center">0x70</div><div class="a" style="left:64px;top:104px;width:32px;height:16px;background:#999;color:#fff;font-size:8px;text-align:center">0x14</div>
  <div class="t s" style="left:100px;top:87px">- Configuration</div><div class="t s" style="left:100px;top:105px">- Input 1 - Operating Mode</div>
  <div class="a" style="left:0;right:0;top:128px;height:6px;background:#e6e6e6"></div>
  <div class="mi mb" style="left:15px;top:141px;width:185px">Value</div>
  <div class="mi mg" style="left:15px;top:175px;width:185px">Update Value</div>
  <div class="t" style="left:20px;top:218px">Example Usage</div>
  <div class="t" style="left:20px;top:252px">Add To Splitter</div>
  <div class="a" style="left:208px;top:134px;width:7px;bottom:30px;background:#e2e2e2"></div>
  <div class="sh" style="left:235px;top:166px">Input 1 - Operating Mode:</div><div class="ul" style="left:230px;top:185px;width:380px"></div>
  <div class="note" style="left:230px;top:191px;width:380px;height:32px">This property is restricted to a set list of values</div>
  <div class="a" style="left:231px;top:241px;width:202px;height:30px;border:2px solid #8ab4e0;border-radius:3px;font-size:10px;color:#444;line-height:26px;padding-left:6px;box-sizing:border-box;white-space:nowrap;overflow:hidden">Momentary switch (Central Sc ◊</div>
  <div class="a" style="left:499px;top:249px;width:109px;height:24px;background:#2d8ad8;color:#fff;font-size:11px;text-align:center;line-height:24px">Send Update</div>
  <div class="a" style="left:0;right:0;bottom:0;height:32px;background:#fff;border-top:1px solid #ddd"></div>
 </div>
 <div class="sb" style="left:996px;top:117px;width:366px;bottom:0">
  <div class="a" style="left:0;right:0;top:0;height:36px;background:#f3f3f3;border-bottom:1px solid #ddd"></div>
  <div class="tab" style="width:160px">⇡&nbsp; ZWave JS</div>
  <div class="ib" style="left:178px">i</div><div class="ib" style="left:210px">⎘</div><div class="ib" style="left:242px">⌂</div><div class="ib" style="left:274px">⚙</div><div class="ib" style="left:306px">▤</div><div class="t" style="left:342px;top:10px">▾</div>
  <svg class="a" style="left:20px;top:44px" width="34" height="34"><circle cx="6" cy="28" r="5" fill="#2d7fd0"/><path d="M2 15a17 17 0 0 1 17 17" stroke="#2d7fd0" stroke-width="5" fill="none"/><path d="M2 4a28 28 0 0 1 28 28" stroke="#2d7fd0" stroke-width="5" fill="none"/></svg>
  <div class="t s" style="left:62px;top:44px">AEON Labs | ZW090 | v1.2</div><div class="t s" style="left:62px;top:64px">All nodes ready.</div>
  <div class="b" style="left:92px;top:92px;width:22px;height:20px"></div><div class="b" style="left:122px;top:92px;width:22px;height:20px"></div><div class="b" style="left:152px;top:92px;width:22px;height:20px"></div><div class="g" style="left:183px;top:90px;width:2px;height:24px"></div><div class="b" style="left:194px;top:92px;width:22px;height:20px"></div><div class="g" style="left:224px;top:92px;width:22px;height:20px"></div><div class="g" style="left:254px;top:92px;width:22px;height:20px"></div>
  <div class="a" style="left:0;right:0;top:120px;height:1px;background:#ddd"></div>
  <div class="t" style="left:8px;top:135px">˅</div><div class="bd" style="left:26px;top:130px;width:30px">LR</div><div class="t" style="left:64px;top:134px">Living Room</div><div class="t" style="right:18px;top:136px;font-size:9px">Int Sto Pow Sec</div>
  <div class="bd" style="left:44px;top:163px;width:30px">4</div><div class="t" style="left:82px;top:167px">Door Sensor</div><div class="t ok" style="right:92px;top:165px">✔ <span style="color:#f0a020">☾</span></div><div class="a" style="right:38px;top:170px;width:18px;height:9px;background:#2a9a2a"></div><div class="t ok" style="right:14px;top:164px">🔒</div>
  <div class="t" style="left:8px;top:201px">˅</div><div class="bd" style="left:26px;top:196px;width:30px">K</div><div class="t" style="left:64px;top:200px">Kitchen</div><div class="t" style="right:18px;top:202px;font-size:9px">Int Sto Pow Sec</div>
  <div class="a" style="left:0;right:0;top:222px;height:36px;background:#fdeccb;border:2px solid #f2d9a6;box-sizing:border-box"></div>
  <div class="bd" style="left:44px;top:229px;width:30px">5</div><div class="t" style="left:82px;top:233px">RGB Controller</div><div class="t ok" style="right:14px;top:230px">✔ ◯ ✎ 🔒</div>
  <div class="a" style="left:0;right:0;top:318px;bottom:0;background:#f4f4f4"></div><div class="a" style="left:155px;top:320px;width:50px;height:4px;background:#ccc"></div>
  <div class="bd" style="left:20px;top:335px;width:34px;height:34px;line-height:34px">5</div><div class="t s" style="left:64px;top:336px">Fibargroup | FGRGBW-442 | v5.0</div><div class="t s" style="left:64px;top:356px">Alive</div>
  <div class="a" style="left:0;right:0;top:380px;height:1px;background:#ddd"></div>
  <div class="b" style="left:125px;top:385px;width:22px;height:20px"></div><div class="b" style="left:155px;top:385px;width:22px;height:20px"></div><div class="b" style="left:185px;top:385px;width:22px;height:20px"></div><div class="b" style="left:215px;top:385px;width:22px;height:20px"></div>
  <div class="a" style="left:62px;top:414px;width:24px;height:20px;background:#6a9a5a"></div><div class="b" style="left:89px;top:414px;width:225px;height:20px;background:repeating-linear-gradient(90deg,#2d8ad8 0 22px,#fff 22px 25px)"></div>
  <div class="a" style="left:0;right:0;top:437px;bottom:0;background:#fff"></div>
  <div class="t" style="left:10px;top:446px">›&nbsp;&nbsp; <b>0x5B</b> - Central Scene</div>
  <div class="t" style="left:10px;top:477px">˅&nbsp;&nbsp; <b>0x70</b> - Configuration</div>
  <div class="t" style="left:40px;top:508px">✎ State After Power Failure</div><div class="vb" style="top:506px">0</div>
  <div class="a" style="left:0;right:0;top:532px;height:32px;background:#fdeccb;border-bottom:2px solid #a9c4e4"></div><div class="t" style="left:40px;top:539px">✎ Input 1 - Operating Mode</div><div class="vb" style="top:537px">2</div>
  <div class="a" style="left:0;right:0;top:566px;height:30px;background:#ececec"></div><div class="t" style="left:40px;top:570px">✎ Input 2 - Operating Mode</div><div class="vb" style="top:568px">2</div>
  <div class="t" style="left:40px;top:601px">✎ Input 3 - Operating Mode</div><div class="vb" style="top:599px">2</div>
  <div class="t" style="left:40px;top:632px">✎ Input 4 - Operating Mode</div><div class="vb" style="top:630px">2</div>
  <div class="t" style="left:40px;top:663px">✎ Input 1 - Sent Scenes</div><div class="vb" style="top:661px">15</div>
  <div class="t" style="left:40px;top:694px">✎ Input 2 - Sent Scenes</div><div class="vb" style="top:692px">15</div>
  <div class="t" style="left:40px;top:725px">✎ Input 3 - Sent Scenes</div><div class="vb" style="top:723px">15</div>
 </div>
</div>

</body></html>
